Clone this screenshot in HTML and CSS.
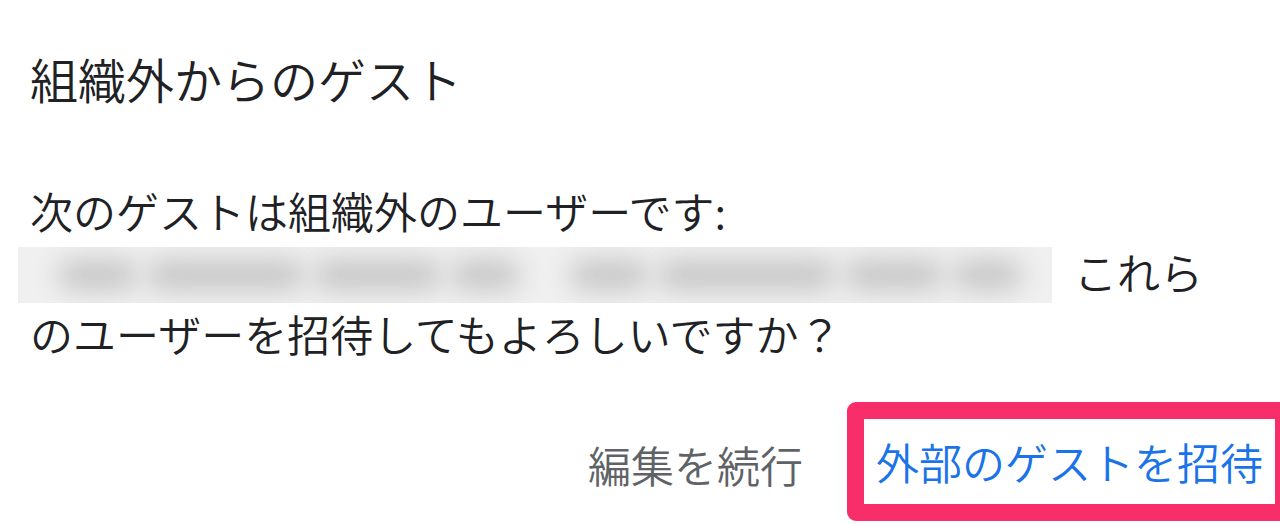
FILE: index.html
```html
<!DOCTYPE html>
<html lang="ja">
<head>
<meta charset="utf-8">
<link rel="stylesheet" href="styles.css">
</head>
<body>
<div class="dialog">
  <h1 class="title">組織外からのゲスト</h1>
  <p class="message">
    <span class="line">次のゲストは組織外のユーザーです:</span>
    <span class="line"><span class="redacted"><span class="blob b1"></span><span class="blob b2"></span><span class="blob b3"></span><span class="blob b4"></span><span class="blob b5"></span><span class="blob b6"></span><span class="blob b7"></span><span class="blob b8"></span></span><span class="tail">これら</span></span>
    <span class="line">のユーザーを招待してもよろしいですか？</span>
  </p>
  <div class="actions">
    <span class="btn btn-secondary">編集を続行</span>
    <span class="btn-highlight"><span class="btn btn-primary">外部のゲストを招待</span></span>
  </div>
</div>
</body>
</html>
```

FILE: styles.css
```css
html, body {
  margin: 0;
  padding: 0;
  background: #ffffff;
  overflow: hidden;
}
body {
  width: 1280px;
  height: 524px;
  font-family: "Noto Sans CJK JP", "Noto Sans", sans-serif;
  font-weight: 350;
}
.dialog {
  padding: 48px 0 0 30px;
}
.title {
  margin: 0;
  font-size: 48px;
  font-weight: 350;
  line-height: 60px;
  color: #202124;
}
.message {
  margin: 72px 0 0 0;
  font-size: 43px;
  line-height: 61px;
  color: #202124;
}
.line {
  display: block;
  white-space: nowrap;
}
.redacted {
  display: inline-flex;
  align-items: center;
  gap: 10px;
  vertical-align: top;
  box-sizing: border-box;
  width: 1034px;
  height: 56px;
  margin: 6px 0 0 -12px;
  padding: 0 30px 0 40px;
  background: #f0f0f0;
  overflow: hidden;
}
.blob {
  display: block;
  height: 30px;
  border-radius: 15px;
  background: #c6c6c6;
  filter: blur(13px);
}
.b1 { width: 80px; }
.b2 { width: 160px; }
.b3 { width: 130px; }
.b4 { width: 70px; }
.b5 { width: 80px; margin-left: 40px; }
.b6 { width: 180px; }
.b7 { width: 100px; }
.b8 { width: 70px; }
.tail {
  margin-left: 22px;
}
.actions {
  display: flex;
  justify-content: flex-end;
  align-items: center;
  gap: 44px;
  margin-top: 38px;
  margin-right: -12px;
}
.btn {
  font-size: 43px;
  line-height: 60px;
}
.btn-secondary {
  color: #5f6368;
  padding-top: 4px;
}
.btn-highlight {
  display: block;
  border: 17px solid #f72e6a;
  border-radius: 9px;
  padding: 12px 12px 13px 12px;
  background: #fff;
}
.btn-primary {
  display: block;
  color: #1a73e8;
}
```
